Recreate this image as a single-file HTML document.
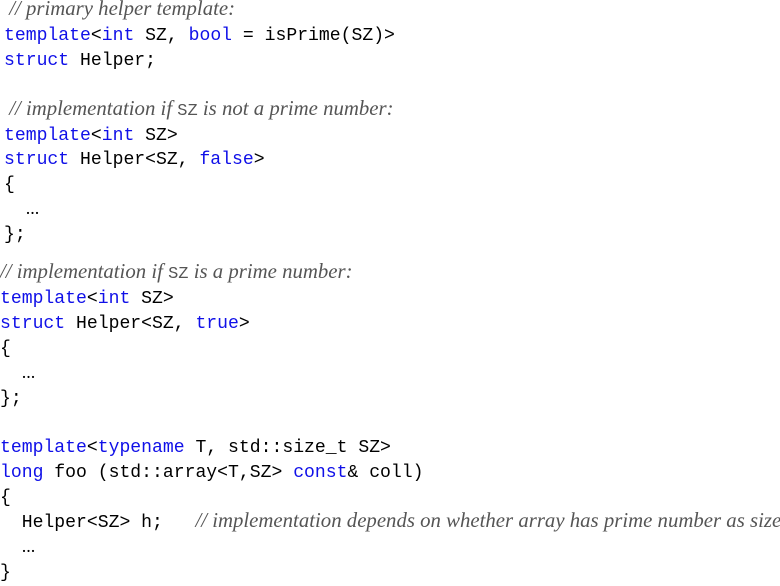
<!DOCTYPE html>
<html><head><meta charset="utf-8"><style>
body{margin:0;width:780px;height:580px;background:#fff;overflow:hidden;position:relative}
.b{position:absolute;font-family:"Liberation Mono",monospace;font-size:18.1px;line-height:24.9px;white-space:pre;color:#000}
.k{color:#1010e8}
.c{font-family:"Liberation Serif",serif;font-style:italic;color:#555;font-size:20.8px;line-height:0}
.c .m{font-family:"Liberation Mono",monospace;font-style:normal;font-size:17px}
.d{font-family:"Liberation Serif",serif;line-height:0}
</style></head><body>
<div class="b" style="left:4px;top:-1px"><span class="c"> // primary helper template:</span>
<span class="k">template</span>&lt;<span class="k">int</span> SZ, <span class="k">bool</span> = isPrime(SZ)&gt;
<span class="k">struct</span> Helper;

<span class="c"> // implementation if <span class="m">SZ</span> is not a prime number:</span>
<span class="k">template</span>&lt;<span class="k">int</span> SZ&gt;
<span class="k">struct</span> Helper&lt;SZ, <span class="k">false</span>&gt;
{
  <span class="d">...</span>
};</div>
<div class="b" style="left:0px;top:262px"><span class="c">// implementation if <span class="m">SZ</span> is a prime number:</span>
<span class="k">template</span>&lt;<span class="k">int</span> SZ&gt;
<span class="k">struct</span> Helper&lt;SZ, <span class="k">true</span>&gt;
{
  <span class="d">...</span>
};

<span class="k">template</span>&lt;<span class="k">typename</span> T, std::size_t SZ&gt;
<span class="k">long</span> foo (std::array&lt;T,SZ&gt; <span class="k">const</span>&amp; coll)
{
  Helper&lt;SZ&gt; h;   <span class="c">// implementation depends on whether array has prime number as size</span>
  <span class="d">...</span>
}</div>
</body></html>
